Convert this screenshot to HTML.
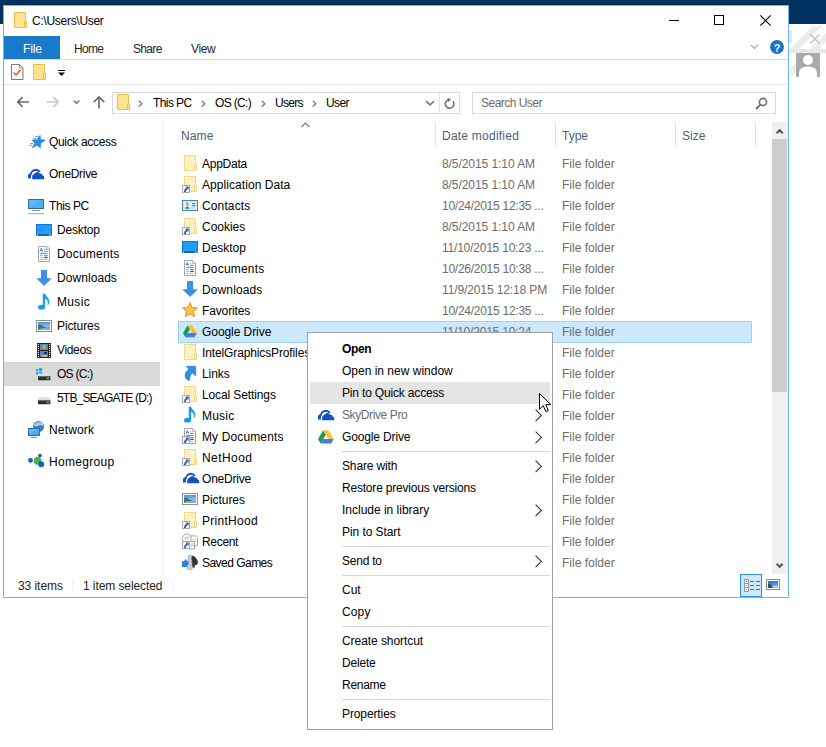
<!DOCTYPE html><html><head><meta charset="utf-8"><style>
html,body{margin:0;padding:0;}
body{width:826px;height:747px;overflow:hidden;position:relative;background:#fff;font-family:"Liberation Sans",sans-serif;font-size:12px;}
.t{position:absolute;white-space:nowrap;line-height:16px;font-family:"Liberation Sans",sans-serif;font-size:12px;}
svg{position:absolute;overflow:visible}
</style></head><body>

<div style="position:absolute;left:0px;top:0px;width:826px;height:24px;background:#02325f"></div>
<div style="position:absolute;left:0px;top:4px;width:826px;height:1px;background:#012a56"></div>
<div style="position:absolute;left:3px;top:5px;width:786px;height:593px;background:#fff;box-sizing:border-box;border:1px solid #6ab8ec"></div>
<svg style="position:absolute;left:789px;top:24px" width="37" height="60" viewBox="0 0 37 60"><defs><clipPath id="rc"><rect x="0" y="0" width="37" height="60"/></clipPath></defs><g clip-path="url(#rc)"><path d="M0 26L24 2H33L9 26zM20 26L44 2H53L29 26z" fill="#ececec"/><path d="M0 50L20 30" stroke="#ececec" stroke-width="6"/><rect x="0" y="25" width="37" height="4" fill="#e6e6e6"/><path d="M21.5 10.5L30.5 19.5M30.5 10.5L21.5 19.5" stroke="#c4c4c4" stroke-width="1.6"/><rect x="0" y="7" width="2" height="11" fill="none" stroke="#d0d0d0"/><rect x="7" y="29" width="24" height="24" fill="#aaaaaa"/><circle cx="19" cy="36" r="5" fill="#fff"/><path d="M10 53V49Q10 42.5 19 42.5Q28 42.5 28 49V53z" fill="#fff"/></g></svg>
<svg style="position:absolute;left:14px;top:12px" width="13" height="16" viewBox="0 0 13 16"><path d="M0.5 0.5h11v15h-11z" fill="#fde48a" stroke="#e8c148"/><path d="M10.5 9.5h2v6h-2z" fill="#fde48a" stroke="#e8c148"/></svg>
<div class="t" style="left:32px;top:13px;color:#000;letter-spacing:-0.292px;">C:\Users\User</div>
<div style="position:absolute;left:669px;top:20px;width:10px;height:1px;background:#000"></div>
<div style="position:absolute;left:714px;top:15px;width:10px;height:10px;box-sizing:border-box;border:1px solid #000"></div>
<svg style="position:absolute;left:760px;top:15px" width="11" height="11" viewBox="0 0 11 11"><path d="M0.3 0.3L10.7 10.7M10.7 0.3L0.3 10.7" stroke="#000" stroke-width="1.1"/></svg>
<div style="position:absolute;left:4px;top:36px;width:56px;height:23px;background:#1979ca"></div>
<div class="t" style="left:23px;top:41px;color:#fff;letter-spacing:-0.167px;">File</div>
<div class="t" style="left:74px;top:41px;color:#262626;letter-spacing:-0.667px;">Home</div>
<div class="t" style="left:133px;top:41px;color:#262626;letter-spacing:-0.675px;">Share</div>
<div class="t" style="left:191px;top:41px;color:#262626;letter-spacing:-0.400px;">View</div>
<svg style="position:absolute;left:750px;top:44px" width="9" height="6" viewBox="0 0 9 6"><path d="M0.8 0.8L4.5 4.5L8.2 0.8" stroke="#a6a6a6" fill="none" stroke-width="1.1"/></svg>
<svg style="position:absolute;left:770px;top:40px" width="14" height="14" viewBox="0 0 14 14"><circle cx="7" cy="7" r="6.9" fill="#1a6fc6"/><text x="7.2" y="11.5" text-anchor="middle" font-family="Liberation Sans" font-weight="bold" font-size="11" fill="#fff">?</text></svg>
<div style="position:absolute;left:4px;top:59px;width:784px;height:1px;background:#dadbdc"></div>
<svg style="position:absolute;left:11px;top:64px" width="13" height="16" viewBox="0 0 13 16"><path d="M0.5 0.5h8l3.5 3.5v11.5h-11.5z" fill="#fbfbfb" stroke="#7a7a7a"/><path d="M8.5 0.5v3.5h3.5" fill="none" stroke="#9a9a9a"/><path d="M2.5 8.5l2.5 2.5L9.5 6" stroke="#e55a22" stroke-width="1.4" fill="none"/></svg>
<svg style="position:absolute;left:33px;top:64px" width="13" height="16" viewBox="0 0 13 16"><path d="M0.5 0.5h11v15h-11z" fill="#fde48a" stroke="#e8c148"/><path d="M10.5 9.5h2v6h-2z" fill="#fde48a" stroke="#e8c148"/></svg>
<svg style="position:absolute;left:58px;top:70px" width="8" height="7" viewBox="0 0 8 7"><rect x="0" y="0" width="7" height="1" fill="#000"/><path d="M0 2.5h7L3.5 6z" fill="#000"/></svg>
<div style="position:absolute;left:4px;top:84px;width:784px;height:1px;background:#e8e8e8"></div>
<svg style="position:absolute;left:16px;top:96px" width="14" height="12" viewBox="0 0 14 12"><path d="M1.8 6H13M6.6 1.2L1.8 6L6.6 10.8" stroke="#6d6d6d" stroke-width="1.7" fill="none"/></svg>
<svg style="position:absolute;left:46px;top:96px" width="14" height="12" viewBox="0 0 14 12"><path d="M0.5 6H11.7M7.4 1.2L12.2 6L7.4 10.8" stroke="#c9c9c9" stroke-width="1.7" fill="none"/></svg>
<svg style="position:absolute;left:73px;top:100px" width="8" height="5" viewBox="0 0 8 5"><path d="M0.6 0.6L3.5 3.5L6.4 0.6" stroke="#6d6d6d" stroke-width="1.4" fill="none"/></svg>
<svg style="position:absolute;left:92px;top:95px" width="14" height="14" viewBox="0 0 14 14"><path d="M7 13.5V2M1.8 7.2L7 2L12.2 7.2" stroke="#6d6d6d" stroke-width="1.7" fill="none"/></svg>
<div style="position:absolute;left:112px;top:92px;width:348px;height:22px;box-sizing:border-box;border:1px solid #d9d9d9"></div>
<div style="position:absolute;left:439px;top:93px;width:1px;height:20px;background:#e3e3e3"></div>
<svg style="position:absolute;left:117px;top:94px" width="13" height="16" viewBox="0 0 13 16"><path d="M0.5 0.5h11v15h-11z" fill="#fde48a" stroke="#e8c148"/><path d="M10.5 9.5h2v6h-2z" fill="#fde48a" stroke="#e8c148"/></svg>
<svg style="position:absolute;left:138px;top:100px" width="5" height="8" viewBox="0 0 5 8"><path d="M0.8 0.8L3.8 3.8L0.8 6.8" stroke="#808080" stroke-width="1.4" fill="none"/></svg>
<svg style="position:absolute;left:201px;top:100px" width="5" height="8" viewBox="0 0 5 8"><path d="M0.8 0.8L3.8 3.8L0.8 6.8" stroke="#808080" stroke-width="1.4" fill="none"/></svg>
<svg style="position:absolute;left:261px;top:100px" width="5" height="8" viewBox="0 0 5 8"><path d="M0.8 0.8L3.8 3.8L0.8 6.8" stroke="#808080" stroke-width="1.4" fill="none"/></svg>
<svg style="position:absolute;left:312px;top:100px" width="5" height="8" viewBox="0 0 5 8"><path d="M0.8 0.8L3.8 3.8L0.8 6.8" stroke="#808080" stroke-width="1.4" fill="none"/></svg>
<div class="t" style="left:153px;top:95px;color:#000;letter-spacing:-0.583px;">This PC</div>
<div class="t" style="left:215px;top:95px;color:#000;letter-spacing:-0.667px;">OS (C:)</div>
<div class="t" style="left:275px;top:95px;color:#000;letter-spacing:-0.700px;">Users</div>
<div class="t" style="left:326px;top:95px;color:#000;letter-spacing:-0.600px;">User</div>
<svg style="position:absolute;left:425px;top:100px" width="10" height="7" viewBox="0 0 10 7"><path d="M1 1L5 5L9 1" stroke="#6d6d6d" stroke-width="1.5" fill="none"/></svg>
<svg style="position:absolute;left:444px;top:98px" width="12" height="11" viewBox="0 0 12 11"><path d="M9 3.3A4.3 4.3 0 1 1 5.6 1.6" stroke="#6d6d6d" stroke-width="1.5" fill="none"/><path d="M3.6 -0.2L7 1.6L4.2 4.2z" fill="#6d6d6d"/></svg>
<div style="position:absolute;left:472px;top:92px;width:304px;height:22px;box-sizing:border-box;border:1px solid #d9d9d9"></div>
<div class="t" style="left:481px;top:95px;color:#6d6d6d;letter-spacing:-0.520px;">Search User</div>
<svg style="position:absolute;left:754px;top:96px" width="14" height="14" viewBox="0 0 14 14"><circle cx="9" cy="6" r="3.6" stroke="#6d6d6d" stroke-width="1.6" fill="none"/><path d="M6.4 8.6L2 13" stroke="#6d6d6d" stroke-width="1.8"/></svg>
<div style="position:absolute;left:162px;top:122px;width:1px;height:452px;background:#f0f0f0"></div>
<div style="position:absolute;left:4px;top:362px;width:156px;height:24px;background:#d9d9d9"></div>
<div class="t" style="left:49px;top:134px;color:#000;letter-spacing:-0.336px;">Quick access</div>
<div class="t" style="left:49px;top:166px;color:#000;letter-spacing:-0.314px;">OneDrive</div>
<div class="t" style="left:49px;top:198px;color:#000;letter-spacing:-0.400px;">This PC</div>
<div class="t" style="left:57px;top:222px;color:#000;letter-spacing:-0.167px;">Desktop</div>
<div class="t" style="left:57px;top:246px;color:#000;letter-spacing:0.200px;">Documents</div>
<div class="t" style="left:57px;top:270px;color:#000;letter-spacing:0.062px;">Downloads</div>
<div class="t" style="left:57px;top:294px;color:#000;letter-spacing:0.325px;">Music</div>
<div class="t" style="left:57px;top:318px;color:#000;letter-spacing:-0.100px;">Pictures</div>
<div class="t" style="left:57px;top:342px;color:#000;letter-spacing:-0.340px;">Videos</div>
<div class="t" style="left:57px;top:366px;color:#000;letter-spacing:-0.733px;">OS (C:)</div>
<div class="t" style="left:57px;top:390px;color:#000;letter-spacing:-0.813px;">5TB_SEAGATE (D:)</div>
<div class="t" style="left:49px;top:422px;color:#000;letter-spacing:0.167px;">Network</div>
<div class="t" style="left:49px;top:454px;color:#000;letter-spacing:0.312px;">Homegroup</div>
<svg style="position:absolute;left:26px;top:132px" width="22" height="18" viewBox="0 0 22 18"><g transform="translate(12,10.2) skewX(-17)"><path d="M0 -6.8L1.75 -2.4L6.5 -2.1L2.85 0.95L4.0 5.5L0 3L-4.0 5.5L-2.85 0.95L-6.5 -2.1L-1.75 -2.4z" fill="#2590e6" stroke="#1a78d0" stroke-width="0.6"/></g><path d="M9 4.5h3.5M7 6.5h3M4 11.5h3M3 13.3h3" stroke="#45a8f0" stroke-width="1.1" opacity="0.85"/></svg>
<svg style="position:absolute;left:28px;top:169px" width="17" height="11" viewBox="0 0 17 11"><path d="M0 9.6V6.6A2.4 2.4 0 0 1 2.2 4.2A5.8 5.8 0 0 1 12.6 2.4L11 3.4A4.2 4.2 0 0 0 3.6 5.8A1.9 1.9 0 0 0 2.9 7.4V9.6z" fill="#1450be"/><path d="M4.2 10.2V7.2A1.9 1.9 0 0 1 6 5.3A3.1 3.1 0 0 1 11.6 4.6A2.5 2.5 0 0 1 14.6 6.4A1.9 1.9 0 0 1 16.2 8.2V10.2z" fill="#1450be" stroke="#fff" stroke-width="1" paint-order="stroke"/></svg>
<svg style="position:absolute;left:28px;top:199px" width="16" height="15" viewBox="0 0 16 15"><rect x="0.5" y="0.5" width="15" height="9" fill="#5cbaf6" stroke="#2f6ea6"/><path d="M1 9L13 1H15V9z" fill="#49aef2"/><rect x="4" y="11" width="8" height="1" fill="#8d9caa"/><rect x="0" y="14" width="16" height="1.2" fill="#a8b5c2"/></svg>
<svg style="position:absolute;left:36px;top:224px" width="16" height="12" viewBox="0 0 16 12"><rect x="0" y="0" width="16" height="12" fill="#1e9af4"/><rect x="0.5" y="0.5" width="15" height="11" fill="none" stroke="#1777d2"/><path d="M2 10L14 1.5V10z" fill="#2aa4f8" opacity="0.6"/><rect x="0" y="10" width="16" height="2" fill="#1865b4"/><rect x="1" y="10.5" width="1" height="1" fill="#fff"/><rect x="13" y="10.5" width="1" height="1" fill="#fff"/><rect x="14.5" y="10.5" width="1" height="1" fill="#fff"/></svg>
<svg style="position:absolute;left:38px;top:246px" width="12" height="16" viewBox="0 0 12 16"><path d="M0.5 0.5h8.5l2.5 2.5v12.5h-11z" fill="#fff" stroke="#a4a4a4"/><path d="M8.5 0.5v3h3" fill="#f4f4f4" stroke="#b4b4b4"/><path d="M1.8 5.6L3.4 2.2L4.5 5.6M2.5 4.5h2" stroke="#2f86e0" stroke-width="0.9" fill="none"/><path d="M6 3.4h0.8M5.9 5.3h3.8M1.9 7.4h7.8M6.2 9.5h3.5" stroke="#2f86e0" stroke-width="0.9"/><path d="M1.9 9.5h2.9M1.9 11.4h2.9M1.9 13.3h7.8" stroke="#a8a8a8" stroke-width="0.9"/><rect x="6.2" y="10.8" width="3.5" height="1.2" fill="#2d5a30"/></svg>
<svg style="position:absolute;left:36px;top:270px" width="16" height="16" viewBox="0 0 16 16"><path d="M5 0h6v8.2h4.8L8.2 16L0.2 8.2H5z" fill="#3b8fe2"/><path d="M8 0.5V15" stroke="#5aa6ee" stroke-width="1" opacity="0.35"/></svg>
<svg style="position:absolute;left:38px;top:294px" width="12" height="17" viewBox="0 0 12 17"><path d="M4.8 -0.2H7Q8 2 9.8 3.8Q11.5 5.5 11.2 8.5Q11 10.5 9.6 11.5Q10.3 9 9.5 7Q8.8 5.5 7 4.6V13.2Q7 15.6 3.4 15.6Q0 15.6 0 13.4Q0 11 3.6 10.8Q4.4 10.8 4.8 11.1Z" fill="#129cf2"/></svg>
<svg style="position:absolute;left:36px;top:320px" width="16" height="12" viewBox="0 0 16 12"><rect x="0.5" y="0.5" width="15" height="11" fill="#fff" stroke="#8f8f8f"/><defs><linearGradient id="sky" x1="0" y1="0" x2="0" y2="1"><stop offset="0" stop-color="#4a90e0"/><stop offset="1" stop-color="#c8e0f4"/></linearGradient></defs><rect x="2" y="2" width="12" height="8" fill="url(#sky)"/><path d="M2 5.5Q4 3.5 6 5.5Q8 7 10 7.5Q12 7.8 14 7.5V10H2z" fill="#3a7a5a"/><path d="M5 8.5Q9 7.5 14 8V10H2V9.5z" fill="#7fb0d8"/></svg>
<svg style="position:absolute;left:37px;top:343px" width="14" height="15" viewBox="0 0 14 15"><rect x="0" y="0" width="14" height="15" fill="#222"/><rect x="0.8" y="1" width="1.2" height="1" fill="#fff"/><rect x="12" y="1" width="1.2" height="1" fill="#fff"/><rect x="0.8" y="3" width="1.2" height="1" fill="#fff"/><rect x="12" y="3" width="1.2" height="1" fill="#fff"/><rect x="0.8" y="5" width="1.2" height="1" fill="#fff"/><rect x="12" y="5" width="1.2" height="1" fill="#fff"/><rect x="0.8" y="7" width="1.2" height="1" fill="#fff"/><rect x="12" y="7" width="1.2" height="1" fill="#fff"/><rect x="0.8" y="9" width="1.2" height="1" fill="#fff"/><rect x="12" y="9" width="1.2" height="1" fill="#fff"/><rect x="0.8" y="11" width="1.2" height="1" fill="#fff"/><rect x="12" y="11" width="1.2" height="1" fill="#fff"/><rect x="0.8" y="13" width="1.2" height="1" fill="#fff"/><rect x="12" y="13" width="1.2" height="1" fill="#fff"/><rect x="3" y="1" width="8" height="6" fill="#4a8ad8"/><rect x="3" y="8" width="8" height="6" fill="#4a8ad8"/><circle cx="7.5" cy="4" r="1.8" fill="#e8b030"/><rect x="3" y="5.5" width="3" height="1.5" fill="#e06030"/><rect x="8.5" y="3" width="2.5" height="2" fill="#3aa050"/><rect x="5" y="12" width="5" height="2" fill="#e8b030"/><rect x="7" y="9" width="3" height="2" fill="#2a2a6a"/></svg>
<svg style="position:absolute;left:36px;top:368px" width="7" height="8" viewBox="0 0 7 8"><rect x="0" y="1" width="2.2" height="2.2" fill="#1d9ef0"/><rect x="3" y="0.2" width="3.2" height="3" fill="#1d9ef0"/><rect x="0" y="4" width="2.2" height="2.4" fill="#1d9ef0"/><rect x="3" y="4" width="3.2" height="3" fill="#1d9ef0"/></svg>
<svg style="position:absolute;left:37px;top:373px" width="14" height="8" viewBox="0 0 14 8"><path d="M2 0.3h10l1.5 3H0.5z" fill="#dcdcdc" opacity="0.9"/><rect x="1" y="3.4" width="12.4" height="3.8" rx="0.4" fill="#2e2e2e"/><rect x="1" y="3.4" width="12.4" height="0.8" fill="#505050"/><rect x="9.6" y="4.6" width="2.4" height="1.6" fill="#3ccf52"/></svg>
<svg style="position:absolute;left:37px;top:397px" width="14" height="8" viewBox="0 0 14 8"><path d="M2 0.3h10l1.5 3H0.5z" fill="#dcdcdc" opacity="0.9"/><rect x="1" y="3.4" width="12.4" height="3.8" rx="0.4" fill="#2e2e2e"/><rect x="1" y="3.4" width="12.4" height="0.8" fill="#505050"/><rect x="9.6" y="4.6" width="2.4" height="1.6" fill="#3ccf52"/></svg>
<svg style="position:absolute;left:27px;top:422px" width="18" height="17" viewBox="0 0 18 17"><circle cx="11.5" cy="4.6" r="5.6" fill="#3f7fb8"/><path d="M6.5 3.5Q9 -0.5 13 0Q16.5 1 17 4Q13 2.5 9.5 4.5z" fill="#bfe0f6" opacity="0.8"/><rect x="1.5" y="6.5" width="11" height="7" fill="#62b8f2" stroke="#2a6aa8"/><path d="M2 13L12 7V13z" fill="#4aa8ee"/><path d="M4 15.5h6" stroke="#8a9aaa"/></svg>
<svg style="position:absolute;left:27px;top:454px" width="18" height="14" viewBox="0 0 18 14"><circle cx="3.5" cy="6.4" r="2.4" fill="#1a5fb8"/><circle cx="10.6" cy="6.8" r="3.9" fill="#3fb54e"/><circle cx="13" cy="1.6" r="1.9" fill="#1a5fb8"/><circle cx="14.2" cy="10.2" r="3" fill="#1a5fb8"/></svg>
<div class="t" style="left:181px;top:128px;color:#4c607a;letter-spacing:0.133px;">Name</div>
<div class="t" style="left:442px;top:128px;color:#4c607a;letter-spacing:0.233px;">Date modified</div>
<div class="t" style="left:562px;top:128px;color:#4c607a;">Type</div>
<div class="t" style="left:682px;top:128px;color:#4c607a;">Size</div>
<div style="position:absolute;left:435px;top:122px;width:1px;height:25px;background:#e5e5e5"></div>
<div style="position:absolute;left:555px;top:122px;width:1px;height:25px;background:#e5e5e5"></div>
<div style="position:absolute;left:675px;top:122px;width:1px;height:25px;background:#e5e5e5"></div>
<div style="position:absolute;left:755px;top:122px;width:1px;height:25px;background:#e5e5e5"></div>
<svg style="position:absolute;left:301px;top:122px" width="9" height="6" viewBox="0 0 9 6"><path d="M0.5 5L4.5 1L8.5 5" stroke="#7a7a7a" stroke-width="1.1" fill="none"/></svg>
<div style="position:absolute;left:178px;top:321px;width:574px;height:22px;box-sizing:border-box;background:#cce8ff;border:1px solid #99d1ff"></div>
<div class="t" style="left:202px;top:156px;color:#000;letter-spacing:-0.250px;">AppData</div>
<div class="t" style="left:442px;top:156px;color:#6d6d6d;letter-spacing:-0.067px;">8/5/2015 1:10 AM</div>
<div class="t" style="left:562px;top:156px;color:#6d6d6d;">File folder</div>
<svg style="position:absolute;left:184px;top:155px" width="13" height="16" viewBox="0 0 13 16"><path d="M0.5 0.5h11v15h-11z" fill="#fdf0c0" stroke="#f1d98a"/><path d="M10.5 9.5h2v6h-2z" fill="#fdf0c0" stroke="#f1d98a"/></svg>
<div class="t" style="left:202px;top:177px;color:#000;letter-spacing:0.060px;">Application Data</div>
<div class="t" style="left:442px;top:177px;color:#6d6d6d;letter-spacing:-0.067px;">8/5/2015 1:10 AM</div>
<div class="t" style="left:562px;top:177px;color:#6d6d6d;">File folder</div>
<svg style="position:absolute;left:184px;top:176px" width="13" height="16" viewBox="0 0 13 16"><path d="M0.5 0.5h11v15h-11z" fill="#fdf0c0" stroke="#f1d98a"/><path d="M10.5 9.5h2v6h-2z" fill="#fdf0c0" stroke="#f1d98a"/></svg><svg style="position:absolute;left:182px;top:185px" width="8" height="8" viewBox="0 0 8 8"><rect x="0.5" y="0.5" width="7" height="7" fill="#fff" stroke="#a8a8a8"/><path d="M2.8 7Q2.6 4.8 5 3.4" stroke="#2a5ab8" stroke-width="1.8" fill="none"/><path d="M3.2 1.6H6.6V5z" fill="#2a5ab8"/></svg>
<div class="t" style="left:202px;top:198px;color:#000;letter-spacing:0.129px;">Contacts</div>
<div class="t" style="left:442px;top:198px;color:#6d6d6d;letter-spacing:-0.263px;">10/24/2015 12:35 ...</div>
<div class="t" style="left:562px;top:198px;color:#6d6d6d;">File folder</div>
<svg style="position:absolute;left:182px;top:200px" width="16" height="11" viewBox="0 0 16 11"><rect x="0.5" y="0.5" width="15" height="10" fill="#d2ebf8" stroke="#4586b8"/><circle cx="5.3" cy="5" r="3.3" fill="#f4f9fc"/><circle cx="5.3" cy="4.4" r="1.6" fill="#d9a070"/><path d="M3.6 3.6Q5.3 1.5 7 3.6V3H3.6z" fill="#3a3a3a"/><path d="M3.2 8.8Q3.4 6.4 5.3 6.4Q7.2 6.4 7.4 8.8z" fill="#3a8a62"/><path d="M10 3.6h3.2M10 5.8h3.2" stroke="#3f6f9c" stroke-width="1"/></svg>
<div class="t" style="left:202px;top:219px;color:#000;letter-spacing:-0.033px;">Cookies</div>
<div class="t" style="left:442px;top:219px;color:#6d6d6d;letter-spacing:-0.067px;">8/5/2015 1:10 AM</div>
<div class="t" style="left:562px;top:219px;color:#6d6d6d;">File folder</div>
<svg style="position:absolute;left:184px;top:218px" width="13" height="16" viewBox="0 0 13 16"><path d="M0.5 0.5h11v15h-11z" fill="#fdf0c0" stroke="#f1d98a"/><path d="M10.5 9.5h2v6h-2z" fill="#fdf0c0" stroke="#f1d98a"/></svg><svg style="position:absolute;left:182px;top:227px" width="8" height="8" viewBox="0 0 8 8"><rect x="0.5" y="0.5" width="7" height="7" fill="#fff" stroke="#a8a8a8"/><path d="M2.8 7Q2.6 4.8 5 3.4" stroke="#2a5ab8" stroke-width="1.8" fill="none"/><path d="M3.2 1.6H6.6V5z" fill="#2a5ab8"/></svg>
<div class="t" style="left:202px;top:240px;color:#000;letter-spacing:-0.017px;">Desktop</div>
<div class="t" style="left:442px;top:240px;color:#6d6d6d;letter-spacing:-0.211px;">11/10/2015 10:23 ...</div>
<div class="t" style="left:562px;top:240px;color:#6d6d6d;">File folder</div>
<svg style="position:absolute;left:182px;top:241px" width="16" height="12" viewBox="0 0 16 12"><rect x="0" y="0" width="16" height="12" fill="#1e9af4"/><rect x="0.5" y="0.5" width="15" height="11" fill="none" stroke="#1777d2"/><path d="M2 10L14 1.5V10z" fill="#2aa4f8" opacity="0.6"/><rect x="0" y="10" width="16" height="2" fill="#1865b4"/><rect x="1" y="10.5" width="1" height="1" fill="#fff"/><rect x="13" y="10.5" width="1" height="1" fill="#fff"/><rect x="14.5" y="10.5" width="1" height="1" fill="#fff"/></svg>
<div class="t" style="left:202px;top:261px;color:#000;letter-spacing:0.188px;">Documents</div>
<div class="t" style="left:442px;top:261px;color:#6d6d6d;letter-spacing:-0.263px;">10/26/2015 10:38 ...</div>
<div class="t" style="left:562px;top:261px;color:#6d6d6d;">File folder</div>
<svg style="position:absolute;left:184px;top:260px" width="12" height="16" viewBox="0 0 12 16"><path d="M0.5 0.5h8.5l2.5 2.5v12.5h-11z" fill="#fff" stroke="#a4a4a4"/><path d="M8.5 0.5v3h3" fill="#f4f4f4" stroke="#b4b4b4"/><path d="M1.8 5.6L3.4 2.2L4.5 5.6M2.5 4.5h2" stroke="#2f86e0" stroke-width="0.9" fill="none"/><path d="M6 3.4h0.8M5.9 5.3h3.8M1.9 7.4h7.8M6.2 9.5h3.5" stroke="#2f86e0" stroke-width="0.9"/><path d="M1.9 9.5h2.9M1.9 11.4h2.9M1.9 13.3h7.8" stroke="#a8a8a8" stroke-width="0.9"/><rect x="6.2" y="10.8" width="3.5" height="1.2" fill="#2d5a30"/></svg>
<div class="t" style="left:202px;top:282px;color:#000;letter-spacing:0.112px;">Downloads</div>
<div class="t" style="left:442px;top:282px;color:#6d6d6d;letter-spacing:-0.118px;">11/9/2015 12:18 PM</div>
<div class="t" style="left:562px;top:282px;color:#6d6d6d;">File folder</div>
<svg style="position:absolute;left:182px;top:281px" width="16" height="16" viewBox="0 0 16 16"><path d="M5 0h6v8.2h4.8L8.2 16L0.2 8.2H5z" fill="#3b8fe2"/><path d="M8 0.5V15" stroke="#5aa6ee" stroke-width="1" opacity="0.35"/></svg>
<div class="t" style="left:202px;top:303px;color:#000;letter-spacing:-0.138px;">Favorites</div>
<div class="t" style="left:442px;top:303px;color:#6d6d6d;letter-spacing:-0.263px;">10/24/2015 12:35 ...</div>
<div class="t" style="left:562px;top:303px;color:#6d6d6d;">File folder</div>
<svg style="position:absolute;left:182px;top:302px" width="16" height="16" viewBox="0 0 16 16"><path d="M8 0.8L10.1 5.6L15.3 6L11.4 9.4L12.6 14.6L8 11.9L3.4 14.6L4.6 9.4L0.7 6L5.9 5.6z" fill="#fbc44e" stroke="#e08a1e" stroke-width="1"/></svg>
<div class="t" style="left:202px;top:324px;color:#000;letter-spacing:-0.064px;">Google Drive</div>
<div class="t" style="left:442px;top:324px;color:#6d6d6d;letter-spacing:-0.211px;">11/10/2015 10:24 ...</div>
<div class="t" style="left:562px;top:324px;color:#6d6d6d;">File folder</div>
<svg style="position:absolute;left:183px;top:325px" width="14" height="13" viewBox="0 0 14 13"><path d="M4.6 0.2L0 8.1L2.3 12.2L6.9 4.2z" fill="#1e9b4f"/><path d="M4.6 0.2h4.6L13.9 8.1H9.3z" fill="#f6c338"/><path d="M2.3 12.2H11.6L13.9 8.1H4.6z" fill="#3f7fe8"/></svg>
<div class="t" style="left:202px;top:345px;color:#000;letter-spacing:-0.125px;">IntelGraphicsProfiles</div>
<div class="t" style="left:562px;top:345px;color:#6d6d6d;">File folder</div>
<svg style="position:absolute;left:184px;top:344px" width="13" height="16" viewBox="0 0 13 16"><path d="M0.5 0.5h11v15h-11z" fill="#fdf0c0" stroke="#f1d98a"/><path d="M10.5 9.5h2v6h-2z" fill="#fdf0c0" stroke="#f1d98a"/></svg>
<div class="t" style="left:202px;top:366px;color:#000;letter-spacing:-0.075px;">Links</div>
<div class="t" style="left:562px;top:366px;color:#6d6d6d;">File folder</div>
<svg style="position:absolute;left:185px;top:366px" width="12" height="16" viewBox="0 0 12 16"><path d="M1 0.2H10.8V10L7.3 7Q4.5 9 4.5 14.8Q0 13.5 0 9.5Q0 5.5 3.8 3.2Z" fill="#318fe4" stroke="#2a74cc" stroke-width="0.5"/></svg>
<div class="t" style="left:202px;top:387px;color:#000;letter-spacing:-0.115px;">Local Settings</div>
<div class="t" style="left:562px;top:387px;color:#6d6d6d;">File folder</div>
<svg style="position:absolute;left:184px;top:386px" width="13" height="16" viewBox="0 0 13 16"><path d="M0.5 0.5h11v15h-11z" fill="#fdf0c0" stroke="#f1d98a"/><path d="M10.5 9.5h2v6h-2z" fill="#fdf0c0" stroke="#f1d98a"/></svg><svg style="position:absolute;left:182px;top:395px" width="8" height="8" viewBox="0 0 8 8"><rect x="0.5" y="0.5" width="7" height="7" fill="#fff" stroke="#a8a8a8"/><path d="M2.8 7Q2.6 4.8 5 3.4" stroke="#2a5ab8" stroke-width="1.8" fill="none"/><path d="M3.2 1.6H6.6V5z" fill="#2a5ab8"/></svg>
<div class="t" style="left:202px;top:408px;color:#000;letter-spacing:0.225px;">Music</div>
<div class="t" style="left:562px;top:408px;color:#6d6d6d;">File folder</div>
<svg style="position:absolute;left:184px;top:407px" width="12" height="17" viewBox="0 0 12 17"><path d="M4.8 -0.2H7Q8 2 9.8 3.8Q11.5 5.5 11.2 8.5Q11 10.5 9.6 11.5Q10.3 9 9.5 7Q8.8 5.5 7 4.6V13.2Q7 15.6 3.4 15.6Q0 15.6 0 13.4Q0 11 3.6 10.8Q4.4 10.8 4.8 11.1Z" fill="#129cf2"/></svg>
<div class="t" style="left:202px;top:429px;color:#000;letter-spacing:0.127px;">My Documents</div>
<div class="t" style="left:562px;top:429px;color:#6d6d6d;">File folder</div>
<svg style="position:absolute;left:184px;top:428px" width="12" height="16" viewBox="0 0 12 16"><path d="M0.5 0.5h8.5l2.5 2.5v12.5h-11z" fill="#fff" stroke="#a4a4a4"/><path d="M8.5 0.5v3h3" fill="#f4f4f4" stroke="#b4b4b4"/><path d="M1.8 5.6L3.4 2.2L4.5 5.6M2.5 4.5h2" stroke="#2f86e0" stroke-width="0.9" fill="none"/><path d="M6 3.4h0.8M5.9 5.3h3.8M1.9 7.4h7.8M6.2 9.5h3.5" stroke="#2f86e0" stroke-width="0.9"/><path d="M1.9 9.5h2.9M1.9 11.4h2.9M1.9 13.3h7.8" stroke="#a8a8a8" stroke-width="0.9"/><rect x="6.2" y="10.8" width="3.5" height="1.2" fill="#2d5a30"/></svg><svg style="position:absolute;left:182px;top:436px" width="8" height="8" viewBox="0 0 8 8"><rect x="0.5" y="0.5" width="7" height="7" fill="#fff" stroke="#a8a8a8"/><path d="M2.8 7Q2.6 4.8 5 3.4" stroke="#2a5ab8" stroke-width="1.8" fill="none"/><path d="M3.2 1.6H6.6V5z" fill="#2a5ab8"/></svg>
<div class="t" style="left:202px;top:450px;color:#000;letter-spacing:0.433px;">NetHood</div>
<div class="t" style="left:562px;top:450px;color:#6d6d6d;">File folder</div>
<svg style="position:absolute;left:184px;top:449px" width="13" height="16" viewBox="0 0 13 16"><path d="M0.5 0.5h11v15h-11z" fill="#fdf0c0" stroke="#f1d98a"/><path d="M10.5 9.5h2v6h-2z" fill="#fdf0c0" stroke="#f1d98a"/></svg><svg style="position:absolute;left:182px;top:458px" width="8" height="8" viewBox="0 0 8 8"><rect x="0.5" y="0.5" width="7" height="7" fill="#fff" stroke="#a8a8a8"/><path d="M2.8 7Q2.6 4.8 5 3.4" stroke="#2a5ab8" stroke-width="1.8" fill="none"/><path d="M3.2 1.6H6.6V5z" fill="#2a5ab8"/></svg>
<div class="t" style="left:202px;top:471px;color:#000;letter-spacing:-0.200px;">OneDrive</div>
<div class="t" style="left:562px;top:471px;color:#6d6d6d;">File folder</div>
<svg style="position:absolute;left:183px;top:473px" width="17" height="11" viewBox="0 0 17 11"><path d="M0 9.6V6.6A2.4 2.4 0 0 1 2.2 4.2A5.8 5.8 0 0 1 12.6 2.4L11 3.4A4.2 4.2 0 0 0 3.6 5.8A1.9 1.9 0 0 0 2.9 7.4V9.6z" fill="#1450be"/><path d="M4.2 10.2V7.2A1.9 1.9 0 0 1 6 5.3A3.1 3.1 0 0 1 11.6 4.6A2.5 2.5 0 0 1 14.6 6.4A1.9 1.9 0 0 1 16.2 8.2V10.2z" fill="#1450be" stroke="#fff" stroke-width="1" paint-order="stroke"/></svg>
<div class="t" style="left:202px;top:492px;color:#000;letter-spacing:-0.057px;">Pictures</div>
<div class="t" style="left:562px;top:492px;color:#6d6d6d;">File folder</div>
<svg style="position:absolute;left:182px;top:493px" width="16" height="12" viewBox="0 0 16 12"><rect x="0.5" y="0.5" width="15" height="11" fill="#fff" stroke="#8f8f8f"/><defs><linearGradient id="sky" x1="0" y1="0" x2="0" y2="1"><stop offset="0" stop-color="#4a90e0"/><stop offset="1" stop-color="#c8e0f4"/></linearGradient></defs><rect x="2" y="2" width="12" height="8" fill="url(#sky)"/><path d="M2 5.5Q4 3.5 6 5.5Q8 7 10 7.5Q12 7.8 14 7.5V10H2z" fill="#3a7a5a"/><path d="M5 8.5Q9 7.5 14 8V10H2V9.5z" fill="#7fb0d8"/></svg>
<div class="t" style="left:202px;top:513px;color:#000;letter-spacing:0.287px;">PrintHood</div>
<div class="t" style="left:562px;top:513px;color:#6d6d6d;">File folder</div>
<svg style="position:absolute;left:184px;top:512px" width="13" height="16" viewBox="0 0 13 16"><path d="M0.5 0.5h11v15h-11z" fill="#fdf0c0" stroke="#f1d98a"/><path d="M10.5 9.5h2v6h-2z" fill="#fdf0c0" stroke="#f1d98a"/></svg><svg style="position:absolute;left:182px;top:521px" width="8" height="8" viewBox="0 0 8 8"><rect x="0.5" y="0.5" width="7" height="7" fill="#fff" stroke="#a8a8a8"/><path d="M2.8 7Q2.6 4.8 5 3.4" stroke="#2a5ab8" stroke-width="1.8" fill="none"/><path d="M3.2 1.6H6.6V5z" fill="#2a5ab8"/></svg>
<div class="t" style="left:202px;top:534px;color:#000;letter-spacing:-0.320px;">Recent</div>
<div class="t" style="left:562px;top:534px;color:#6d6d6d;">File folder</div>
<svg style="position:absolute;left:182px;top:534px" width="16" height="16" viewBox="0 0 16 16"><path d="M8.7 1.9H13.5L15.5 3.9V11.6H8.7z" fill="#fff" stroke="#a8a8a8"/><circle cx="4.8" cy="4.3" r="4.4" fill="#f6f8fa" stroke="#b0b0b0"/><path d="M2.5 5L4 3.6L5.2 4.6L7 2.6" stroke="#8a8a8a" stroke-width="0.8" fill="none"/><path d="M10.5 5.5h3M10.5 7.5h3" stroke="#c8c8c8" stroke-width="0.8"/><rect x="7.5" y="7.5" width="5" height="7.5" fill="#fff" stroke="#a8a8a8"/><path d="M8.6 10h3M8.6 12h3" stroke="#7fb0e0" stroke-width="0.9"/></svg><svg style="position:absolute;left:182px;top:541px" width="8" height="8" viewBox="0 0 8 8"><rect x="0.5" y="0.5" width="7" height="7" fill="#fff" stroke="#a8a8a8"/><path d="M2.8 7Q2.6 4.8 5 3.4" stroke="#2a5ab8" stroke-width="1.8" fill="none"/><path d="M3.2 1.6H6.6V5z" fill="#2a5ab8"/></svg>
<div class="t" style="left:202px;top:555px;color:#000;letter-spacing:-0.530px;">Saved Games</div>
<div class="t" style="left:562px;top:555px;color:#6d6d6d;">File folder</div>
<svg style="position:absolute;left:182px;top:555px" width="16" height="17" viewBox="0 0 16 17"><path d="M9.5 0.5Q12.5 0.3 14 3Q16.3 5.5 15.8 8.5Q15 10.5 12.5 10.5L13 12.5H9.8Q10.5 8 9.3 4.5z" fill="#333"/><path d="M7.8 0.2Q9.8 0.2 9.8 2Q9.8 3.3 8.8 3.8Q10 5 9.8 7Q10.2 10 10.6 13.5Q10 14.5 7.6 14.5Q5.5 14.5 5 13.5L5.6 7Q5.5 5 6.8 3.8Q5.8 3.3 5.8 2Q5.8 0.2 7.8 0.2z" fill="#c4ccd2" stroke="#8a949c" stroke-width="0.6"/><path d="M0 6.2H2.3Q2.3 4.3 3.5 4.3Q4.8 4.3 4.8 6.2H6.6V9.8Q5 9.6 5 11Q5 12.2 6.6 12.2V12H0z" fill="#2f7fd8"/></svg>
<div style="position:absolute;left:772px;top:122px;width:16px;height:452px;background:#f0f0f0"></div>
<div style="position:absolute;left:772px;top:139px;width:15px;height:253px;background:#cdcdcd"></div>
<svg style="position:absolute;left:776px;top:128px" width="8" height="6" viewBox="0 0 8 6"><path d="M0.7 5.3L3.7 2.1L6.7 5.3" stroke="#505050" stroke-width="2" fill="none"/></svg>
<svg style="position:absolute;left:776px;top:563px" width="8" height="6" viewBox="0 0 8 6"><path d="M0.7 0.7L3.7 3.9L6.7 0.7" stroke="#505050" stroke-width="2" fill="none"/></svg>
<div class="t" style="left:18px;top:578px;color:#1e1e1e;letter-spacing:-0.057px;">33 items</div>
<div style="position:absolute;left:72px;top:580px;width:1px;height:11px;background:#f0f0f0"></div>
<div class="t" style="left:83px;top:578px;color:#1e1e1e;letter-spacing:-0.086px;">1 item selected</div>
<div style="position:absolute;left:172px;top:580px;width:1px;height:11px;background:#f0f0f0"></div>
<div style="position:absolute;left:740px;top:574px;width:22px;height:23px;box-sizing:border-box;background:#cce8ff;border:1px solid #2a94da"></div>
<svg style="position:absolute;left:744px;top:579px" width="17" height="13" viewBox="0 0 17 13"><rect x="0.5" y="0.5" width="4" height="12" fill="#fff" stroke="#9a9a9a"/><path d="M0.5 4.5h4M0.5 8.5h4" stroke="#9a9a9a"/><rect x="2" y="2" width="1" height="1" fill="#3a8a4a"/><rect x="2" y="6" width="1" height="1" fill="#3a7ae0"/><rect x="2" y="10" width="1" height="1" fill="#e05a20"/><path d="M6 2.5h4M12 2.5h4M6 6.5h4M12 6.5h4M6 10.5h4M12 10.5h4" stroke="#6d6d6d" stroke-width="1"/></svg>
<svg style="position:absolute;left:766px;top:579px" width="14" height="11" viewBox="0 0 14 11"><rect x="0.5" y="0.5" width="13" height="10" fill="#fff" stroke="#8a8a8a"/><rect x="2" y="2" width="10" height="7" fill="#4a90e0"/><rect x="2" y="2" width="10" height="2" fill="#3a7ad8"/><path d="M2 4.5Q4 4 6 6.5L8 7.5Q10 7 12 8V9H2z" fill="#2f5a58"/><path d="M6 7Q9 6 12 6.5V9H7z" fill="#a8c8e0"/></svg>
<div style="position:absolute;left:307px;top:332px;width:246px;height:398px;box-sizing:border-box;background:#fff;border:1px solid #a0a0a0"></div>
<div class="t" style="left:342px;top:341px;color:#000;font-weight:bold;letter-spacing:-0.333px;">Open</div>
<div class="t" style="left:342px;top:363px;color:#000;letter-spacing:0.000px;">Open in new window</div>
<div style="position:absolute;left:310px;top:382px;width:240px;height:22px;background:#e5e5e5"></div>
<div class="t" style="left:342px;top:385px;color:#000;letter-spacing:-0.167px;">Pin to Quick access</div>
<div class="t" style="left:342px;top:407px;color:#6d6d6d;letter-spacing:-0.391px;">SkyDrive Pro</div>
<svg style="position:absolute;left:535px;top:409px" width="8" height="13" viewBox="0 0 8 13"><path d="M0.6 0.6L6.4 6.4L0.6 12.2" stroke="#2a2a50" stroke-width="1.05" fill="none"/></svg>
<svg style="position:absolute;left:318px;top:410px" width="17" height="11" viewBox="0 0 17 11"><path d="M0 9.6V6.6A2.4 2.4 0 0 1 2.2 4.2A5.8 5.8 0 0 1 12.6 2.4L11 3.4A4.2 4.2 0 0 0 3.6 5.8A1.9 1.9 0 0 0 2.9 7.4V9.6z" fill="#1450be"/><path d="M4.2 10.2V7.2A1.9 1.9 0 0 1 6 5.3A3.1 3.1 0 0 1 11.6 4.6A2.5 2.5 0 0 1 14.6 6.4A1.9 1.9 0 0 1 16.2 8.2V10.2z" fill="#1450be" stroke="#fff" stroke-width="1" paint-order="stroke"/></svg>
<div class="t" style="left:342px;top:429px;color:#000;letter-spacing:-0.145px;">Google Drive</div>
<svg style="position:absolute;left:535px;top:431px" width="8" height="13" viewBox="0 0 8 13"><path d="M0.6 0.6L6.4 6.4L0.6 12.2" stroke="#2a2a50" stroke-width="1.05" fill="none"/></svg>
<svg style="position:absolute;left:318px;top:430px" width="16" height="14" viewBox="0 0 16 14"><path d="M5.2 0.2L0 9L2.6 13.6L7.8 4.7z" fill="#1e9b4f"/><path d="M5.2 0.2h5.2L15.8 9H10.5z" fill="#f6c338"/><path d="M2.6 13.6H13.1L15.8 9H5.3z" fill="#3f7fe8"/></svg>
<div style="position:absolute;left:342px;top:451px;width:208px;height:1px;background:#d7d7d7"></div>
<div class="t" style="left:342px;top:458px;color:#000;letter-spacing:-0.133px;">Share with</div>
<svg style="position:absolute;left:535px;top:460px" width="8" height="13" viewBox="0 0 8 13"><path d="M0.6 0.6L6.4 6.4L0.6 12.2" stroke="#2a2a50" stroke-width="1.05" fill="none"/></svg>
<div class="t" style="left:342px;top:480px;color:#000;letter-spacing:-0.200px;">Restore previous versions</div>
<div class="t" style="left:342px;top:502px;color:#000;letter-spacing:-0.012px;">Include in library</div>
<svg style="position:absolute;left:535px;top:504px" width="8" height="13" viewBox="0 0 8 13"><path d="M0.6 0.6L6.4 6.4L0.6 12.2" stroke="#2a2a50" stroke-width="1.05" fill="none"/></svg>
<div class="t" style="left:342px;top:524px;color:#000;letter-spacing:-0.073px;">Pin to Start</div>
<div style="position:absolute;left:342px;top:546px;width:208px;height:1px;background:#d7d7d7"></div>
<div class="t" style="left:342px;top:553px;color:#000;letter-spacing:-0.233px;">Send to</div>
<svg style="position:absolute;left:535px;top:555px" width="8" height="13" viewBox="0 0 8 13"><path d="M0.6 0.6L6.4 6.4L0.6 12.2" stroke="#2a2a50" stroke-width="1.05" fill="none"/></svg>
<div style="position:absolute;left:342px;top:575px;width:208px;height:1px;background:#d7d7d7"></div>
<div class="t" style="left:342px;top:582px;color:#000;letter-spacing:0.000px;">Cut</div>
<div class="t" style="left:342px;top:604px;color:#000;letter-spacing:0.133px;">Copy</div>
<div style="position:absolute;left:342px;top:626px;width:208px;height:1px;background:#d7d7d7"></div>
<div class="t" style="left:342px;top:633px;color:#000;letter-spacing:-0.064px;">Create shortcut</div>
<div class="t" style="left:342px;top:655px;color:#000;letter-spacing:-0.180px;">Delete</div>
<div class="t" style="left:342px;top:677px;color:#000;letter-spacing:-0.280px;">Rename</div>
<div style="position:absolute;left:342px;top:699px;width:208px;height:1px;background:#d7d7d7"></div>
<div class="t" style="left:342px;top:706px;color:#000;letter-spacing:-0.111px;">Properties</div>
<svg style="position:absolute;left:539px;top:393px" width="13" height="20" viewBox="0 0 13 20"><path d="M0.5 0.5V16.2L4.2 12.6L6.8 18.6L9.3 17.5L6.8 11.6H11.8z" fill="#fff" stroke="#000" stroke-width="1" stroke-linejoin="round"/></svg>
</body></html>
